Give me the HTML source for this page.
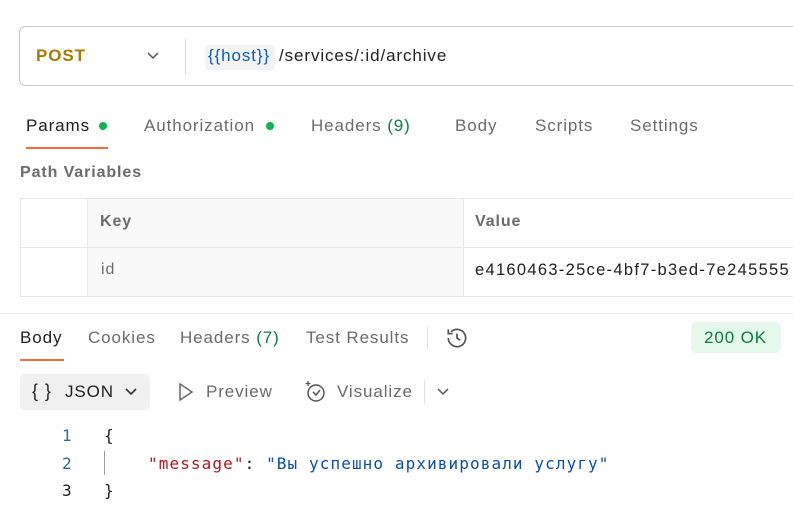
<!DOCTYPE html><html><head><meta charset="utf-8"><style>
body{margin:0;width:793px;height:532px;background:#fff;font-family:"Liberation Sans",sans-serif;position:relative;overflow:hidden;color:#212121;letter-spacing:0.9px}
.a{position:absolute;white-space:nowrap}
.t{font-size:17px;color:#6b6b6b}
</style></head><body>
<div class="a" style="left:19px;top:26px;width:790px;height:60px;border:1px solid #c9c9c9;border-radius:6px;box-sizing:border-box"></div>
<div class="a" style="left:36px;top:46px;font-size:17px;font-weight:bold;color:#a87a00">POST</div>
<svg class="a" style="left:146px;top:51px" width="14" height="10"><path d="M2 2l5 5 5-5" fill="none" stroke="#555" stroke-width="1.5"/></svg>
<div class="a" style="left:185px;top:39px;width:1px;height:35px;background:#ddd"></div>
<div class="a" style="left:205px;top:45px;height:25px;width:70px;background:#f3f3f3;border-radius:4px"></div>
<div class="a" style="left:208px;top:46px;font-size:17px;color:#0b5cc0">{{host}}</div>
<div class="a" style="left:279px;top:46px;font-size:17px;color:#212121">/services/:id/archive</div>

<div class="a t" style="left:26px;top:116px;color:#212121">Params</div>
<div class="a" style="left:99px;top:122px;width:8px;height:8px;border-radius:50%;background:#0cb44f"></div>
<div class="a" style="left:26px;top:147px;width:82px;height:2px;background:#f26b3a"></div>
<div class="a t" style="left:144px;top:116px">Authorization</div>
<div class="a" style="left:266px;top:122px;width:8px;height:8px;border-radius:50%;background:#0cb44f"></div>
<div class="a t" style="left:311px;top:116px">Headers <span style="color:#0a7d4a">(9)</span></div>
<div class="a t" style="left:455px;top:116px">Body</div>
<div class="a t" style="left:535px;top:116px">Scripts</div>
<div class="a t" style="left:630px;top:116px">Settings</div>
<div class="a" style="left:20px;top:164px;font-size:16px;font-weight:bold;color:#6b6b6b">Path Variables</div>

<div class="a" style="left:20px;top:198px;width:800px;height:99px;border:1px solid #e8e8e8;box-sizing:border-box"></div>
<div class="a" style="left:87px;top:199px;width:375px;height:97px;background:#f9f9f9;border-left:1px solid #e8e8e8;border-right:1px solid #e8e8e8"></div>
<div class="a" style="left:20px;top:247px;width:800px;height:1px;background:#e8e8e8"></div>
<div class="a" style="left:100px;top:213px;font-size:16px;font-weight:bold;color:#6b6b6b">Key</div>
<div class="a" style="left:475px;top:213px;font-size:16px;font-weight:bold;color:#6b6b6b">Value</div>
<div class="a" style="left:101px;top:261px;font-size:16px;color:#6b6b6b">id</div>
<div class="a" style="left:475px;top:261px;font-size:16.5px;letter-spacing:1.3px;color:#212121">e4160463-25ce-4bf7-b3ed-7e245555</div>
<div class="a" style="left:0;top:313px;width:793px;height:1px;background:#ebebeb"></div>

<div class="a t" style="left:20px;top:328px;color:#212121">Body</div>
<div class="a" style="left:20px;top:359px;width:44px;height:2px;background:#f26b3a"></div>
<div class="a t" style="left:88px;top:328px">Cookies</div>
<div class="a t" style="left:180px;top:328px">Headers <span style="color:#0a7d4a">(7)</span></div>
<div class="a t" style="left:306px;top:328px">Test Results</div>
<div class="a" style="left:427px;top:327px;width:1px;height:22px;background:#e0e0e0"></div>
<svg class="a" style="left:444px;top:325px" width="26" height="26" viewBox="0 0 24 24"><path d="M4 12a8 8 0 1 0 2.5-5.8M4 4v4h4M12 8v4l3 2" fill="none" stroke="#555" stroke-width="1.6"/></svg>
<div class="a" style="left:691px;top:322px;width:90px;height:31px;background:#e6f8ec;border-radius:5px"></div>
<div class="a" style="left:704px;top:328px;font-size:17px;color:#0a7d3a">200 OK</div>

<div class="a" style="left:20px;top:374px;width:130px;height:36px;background:#f0f0f0;border-radius:5px"></div>
<div class="a" style="left:32px;top:381px;font-size:18px;color:#212121">{ }</div>
<div class="a" style="left:65px;top:382px;font-size:17px;color:#212121">JSON</div>
<svg class="a" style="left:124px;top:387px" width="14" height="10"><path d="M2 2l5 5 5-5" fill="none" stroke="#333" stroke-width="1.6"/></svg>
<svg class="a" style="left:177px;top:382px" width="18" height="20"><path d="M3 2l12 8-12 8z" fill="none" stroke="#666" stroke-width="1.5"/></svg>
<div class="a t" style="left:206px;top:382px">Preview</div>
<svg class="a" style="left:302px;top:378px" width="26" height="26" viewBox="0 0 26 26"><circle cx="14" cy="15" r="8" fill="none" stroke="#555" stroke-width="1.5"/><path d="M11 14l3 3 4-5" fill="none" stroke="#555" stroke-width="1.5"/><path d="M6 3v5M3.5 5.5h5" stroke="#555" stroke-width="1.3"/></svg>
<div class="a t" style="left:337px;top:382px">Visualize</div>
<div class="a" style="left:424px;top:380px;width:1px;height:24px;background:#e0e0e0"></div>
<svg class="a" style="left:436px;top:387px" width="14" height="10"><path d="M2 2l5 5 5-5" fill="none" stroke="#555" stroke-width="1.5"/></svg>

<div style="font-family:'DejaVu Sans Mono','Liberation Mono',monospace;font-size:16px;letter-spacing:1.1px">
<div class="a" style="left:62px;top:426px;color:#2a6b9a">1</div>
<div class="a" style="left:62px;top:454px;color:#2a6b9a">2</div>
<div class="a" style="left:62px;top:481px;color:#212121">3</div>
<div class="a" style="left:104px;top:426px">{</div>
<div class="a" style="left:104px;top:451px;width:1px;height:24px;background:#999"></div>
<div class="a" style="left:148px;top:454px"><span style="color:#b0151b">"message"</span>: <span style="color:#0b4fa3">"Вы успешно архивировали услугу"</span></div>
<div class="a" style="left:104px;top:481px">}</div>
</div>
</body></html>
